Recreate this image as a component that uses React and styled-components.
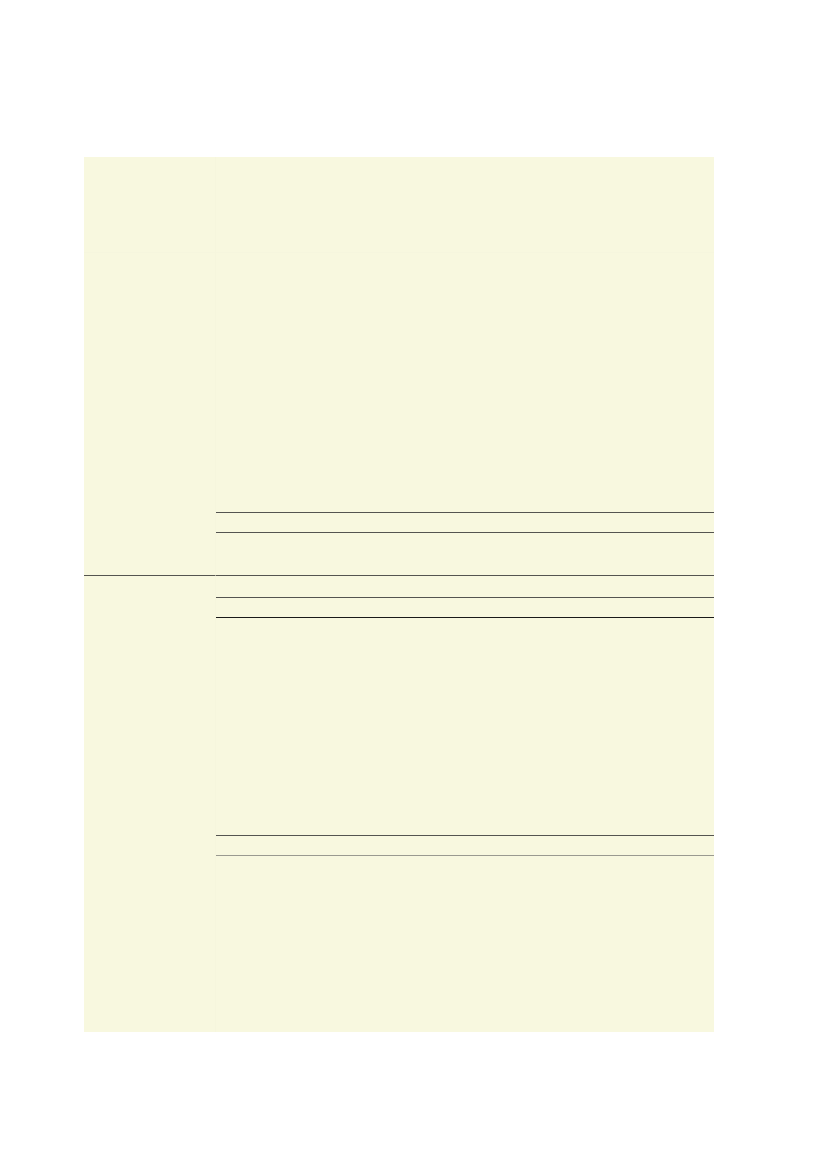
import React from "react";
import styled, { createGlobalStyle } from "styled-components";

const Global = createGlobalStyle`
  html, body { margin: 0; padding: 0; background: #ffffff; }
  body { font-family: "Liberation Sans", Arial, sans-serif; }
`;

const Page = styled.div`
  padding: 157px 0 0 84px;
  min-height: 1169px;
  box-sizing: border-box;
`;

const Sheet = styled.div`
  width: 630px;
  height: 875px;
  background: #f8f8df;
  display: grid;
  grid-template-columns: 132px 498px;
  grid-template-rows: 418px 457px;
`;

const Cell = styled.div`
  display: flex;
  flex-direction: column;
  border-right: ${(p) => (p.$side ? "1px solid #f6f6dd" : "none")};
  border-top: ${(p) => (p.$top ? "1px solid #555550" : "none")};
  box-sizing: border-box;
`;

const Gap = styled.div`
  height: ${(p) => p.$h}px;
  flex: ${(p) => (p.$grow ? 1 : "none")};
  border-bottom: ${(p) => (p.$faint ? "1px solid #f6f6de" : "none")};
`;

const Rule = styled.div`
  height: 1px;
  background: ${(p) => p.$color || "#555550"};
`;

export default function App() {
  return (
    <>
      <Global />
      <Page>
        <Sheet>
          <Cell $side>
            <Gap $h={95} $faint />
          </Cell>
          <Cell>
            <Gap $h={95} $faint />
            <Gap $h={259} />
            <Rule />
            <Gap $h={19} />
            <Rule />
            <Gap $grow />
          </Cell>
          <Cell $side $top />
          <Cell $top>
            <Gap $h={21} />
            <Rule />
            <Gap $h={19} />
            <Rule $color="#1a1a18" />
            <Gap $h={217} />
            <Rule />
            <Gap $h={19} />
            <Rule $color="#9a9a90" />
            <Gap $grow />
          </Cell>
        </Sheet>
      </Page>
    </>
  );
}
